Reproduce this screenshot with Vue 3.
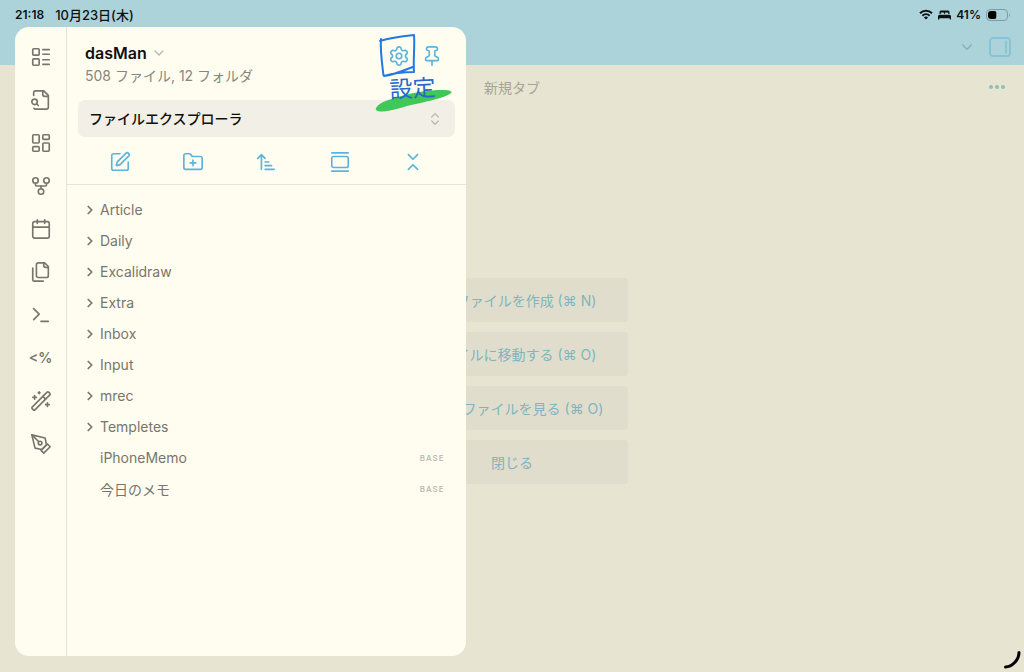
<script setup>
import { ref } from 'vue'

const icons = {
  layoutList: '<rect x="3" y="3" width="7" height="7" rx="1"/><rect x="3" y="14" width="7" height="7" rx="1"/><path d="M14 4h7M14 9h7M14 15h7M14 20h7"/>',
  fileSearch: '<path d="M14 2v4a2 2 0 0 0 2 2h4"/><path d="M4.268 21a2 2 0 0 0 1.727 1H18a2 2 0 0 0 2-2V7l-5-5H6a2 2 0 0 0-2 2v3"/><path d="m9 18-1.5-1.5"/><circle cx="5" cy="14" r="3"/>',
  dashboard: '<rect width="7" height="9" x="3" y="3" rx="1"/><rect width="7" height="5" x="14" y="3" rx="1"/><rect width="7" height="9" x="14" y="12" rx="1"/><rect width="7" height="5" x="3" y="16" rx="1"/>',
  fork: '<circle cx="12" cy="18" r="3"/><circle cx="6" cy="6" r="3"/><circle cx="18" cy="6" r="3"/><path d="M18 9v2c0 .6-.4 1-1 1H7c-.6 0-1-.4-1-1V9"/><path d="M12 12v3"/>',
  calendar: '<path d="M8 2v4M16 2v4"/><rect width="18" height="18" x="3" y="4" rx="2"/><path d="M3 10h18"/>',
  files: '<path d="M20 7h-3a2 2 0 0 1-2-2V2"/><path d="M9 18a2 2 0 0 1-2-2V4a2 2 0 0 1 2-2h7l4 4v10a2 2 0 0 1-2 2Z"/><path d="M3 7.6v12.8A1.6 1.6 0 0 0 4.6 22h9.8"/>',
  terminal: '<path d="m4 17 6-6-6-6"/><path d="M12 19h8"/>',
  wand: '<path d="m21.64 3.64-1.28-1.28a1.21 1.21 0 0 0-1.72 0L2.36 18.64a1.21 1.21 0 0 0 0 1.72l1.28 1.28a1.2 1.2 0 0 0 1.72 0L21.64 5.36a1.2 1.2 0 0 0 0-1.72"/><path d="m14 7 3 3M5 6v4M19 14v4M10 2v2M7 8H3M21 16h-4M11 3H9"/>',
  pen: '<path d="m12 19 7-7 3 3-7 7-3-3z"/><path d="m18 13-1.5-7.5L2 2l3.5 14.5L13 18l5-5z"/><path d="m2 2 7.586 7.586"/><circle cx="11" cy="11" r="2"/>',
  settings: '<path d="M9.671 4.136a2.34 2.34 0 0 1 4.659 0 2.34 2.34 0 0 0 3.319 1.915 2.34 2.34 0 0 1 2.33 4.033 2.34 2.34 0 0 0 0 3.831 2.34 2.34 0 0 1-2.33 4.033 2.34 2.34 0 0 0-3.319 1.915 2.34 2.34 0 0 1-4.659 0 2.34 2.34 0 0 0-3.32-1.915 2.34 2.34 0 0 1-2.33-4.033 2.34 2.34 0 0 0 0-3.831A2.34 2.34 0 0 1 6.35 6.051a2.34 2.34 0 0 0 3.319-1.915"/><circle cx="12" cy="12" r="3"/>',
  pin: '<path d="M12 17v5"/><path d="M9 10.76a2 2 0 0 1-1.11 1.79l-1.78.9A2 2 0 0 0 5 15.24V16a1 1 0 0 0 1 1h12a1 1 0 0 0 1-1v-.76a2 2 0 0 0-1.11-1.79l-1.78-.9A2 2 0 0 1 15 10.76V7a1 1 0 0 1 1-1 2 2 0 0 0 0-4H8a2 2 0 0 0 0 4 1 1 0 0 1 1 1z"/>',
  edit: '<path d="M12 3H5a2 2 0 0 0-2 2v14a2 2 0 0 0 2 2h14a2 2 0 0 0 2-2v-7"/><path d="M18.375 2.625a1 1 0 0 1 3 3l-9.013 9.014a2 2 0 0 1-.853.505l-2.873.84a.5.5 0 0 1-.62-.62l.84-2.873a2 2 0 0 1 .506-.852z"/>',
  folderPlus: '<path d="M12 10v6M9 13h6"/><path d="M20 20a2 2 0 0 0 2-2V8a2 2 0 0 0-2-2h-7.9a2 2 0 0 1-1.69-.9L9.6 3.9A2 2 0 0 0 7.93 3H4a2 2 0 0 0-2 2v13a2 2 0 0 0 2 2Z"/>',
  sort: '<path d="m3 8 4-4 4 4M7 4v16M11 12h4M11 16h7M11 20h10"/>',
  gallery: '<path d="M3 2h18"/><rect width="18" height="12" x="3" y="6" rx="2"/><path d="M3 22h18"/>',
  collapse: '<path d="m7 20 5-5 5 5M7 4l5 5 5-5"/>',
  chevronDown: '<path d="m6 9 6 6 6-6"/>',
  chevronRight: '<path d="m9 18 6-6-6-6"/>',
  upDown: '<path d="m7 15 5 5 5-5M7 9l5-5 5 5"/>',
}

const ribbon = [
  { icon: 'layoutList', label: 'リスト' },
  { icon: 'fileSearch', label: 'ファイル検索' },
  { icon: 'dashboard', label: 'ダッシュボード' },
  { icon: 'fork', label: 'グラフビュー' },
  { icon: 'calendar', label: 'カレンダー' },
  { icon: 'files', label: 'テンプレート' },
  { icon: 'terminal', label: 'コマンドパレット' },
  { text: '<%', label: 'Templater' },
  { icon: 'wand', label: '整形' },
  { icon: 'pen', label: '描画' },
]

const tools = [
  { icon: 'edit', label: '新規ノート' },
  { icon: 'folderPlus', label: '新規フォルダ' },
  { icon: 'sort', label: '並べ替え' },
  { icon: 'gallery', label: '自動表示' },
  { icon: 'collapse', label: '折りたたむ' },
]

const items = [
  { name: 'Article', folder: true },
  { name: 'Daily', folder: true },
  { name: 'Excalidraw', folder: true },
  { name: 'Extra', folder: true },
  { name: 'Inbox', folder: true },
  { name: 'Input', folder: true },
  { name: 'mrec', folder: true },
  { name: 'Templetes', folder: true },
  { name: 'iPhoneMemo', tag: 'BASE' },
  { name: '今日のメモ', tag: 'BASE' },
]

const actions = [
  '新規ファイルを作成 (⌘ N)',
  'ファイルに移動する (⌘ O)',
  '最近のファイルを見る (⌘ O)',
  '閉じる',
]

const view = ref('files')
</script>

<template>
  <div class="app">
    <header class="top">
      <div class="status">
        <span>21:18</span>
        <span class="date">10月23日(木)</span>
        <div class="status-right">
          <svg width="14" height="11" viewBox="0 0 14 11" fill="none" stroke="#0b1214" stroke-width="2">
            <path d="M1 4.2a8.6 8.6 0 0 1 12 0M3.4 6.7a5.2 5.2 0 0 1 7.2 0" />
            <path d="M7 10.6 4.9 8.5a3 3 0 0 1 4.2 0Z" fill="#0b1214" stroke="none" />
          </svg>
          <svg width="13" height="10" viewBox="0 0 13 10" fill="#0b1214">
            <path d="M1.5 4V2A1.6 1.6 0 0 1 3 .5h7A1.6 1.6 0 0 1 11.5 2v2h-1.2V3.3a.8.8 0 0 0-.8-.8H7.7a.8.8 0 0 0-.8.8V4h-.8v-.7a.8.8 0 0 0-.8-.8H3.5a.8.8 0 0 0-.8.8V4Z" />
            <path d="M0 6.2A1.5 1.5 0 0 1 1.5 4.7h10A1.5 1.5 0 0 1 13 6.2v3.3h-1.3V8.3H1.3v1.2H0Z" />
          </svg>
          <span>41%</span>
          <svg width="25" height="12" viewBox="0 0 25 12" fill="none">
            <rect x=".5" y=".5" width="21" height="11" rx="3.5" stroke="#7d9da2" />
            <path d="M5 2H8.500A1.800 1.800 0 0 1 10.300 4V8A1.800 1.800 0 0 1 8.500 10H5A3 3 0 0 1 2 7V5A3 3 0 0 1 5 2Z" fill="#000" />
            <path d="M23 4.2v3.6c1.2-.4 1.2-3.2 0-3.6Z" fill="#7d9da2" />
          </svg>
        </div>
      </div>
      <div class="tabs">
        <button aria-label="タブ一覧"><svg class="faint" width="18" height="18" viewBox="0 0 24 24" v-html="icons.chevronDown" /></button>
        <button aria-label="右サイドバー">
          <svg class="side" width="22" height="20" viewBox="0 0 22 20">
            <rect x="1" y="1" width="20" height="18" rx="3" /><path d="M17 4.5v11" />
          </svg>
        </button>
      </div>
    </header>

    <main class="main">
      <div class="view-head">
        <span class="view-title">新規タブ</span>
        <button class="more" aria-label="その他">
          <svg width="18" height="6" viewBox="0 0 18 6"><circle cx="3" cy="3" r="2" /><circle cx="9" cy="3" r="2" /><circle cx="15" cy="3" r="2" /></svg>
        </button>
      </div>
      <div class="actions">
        <button v-for="a in actions" :key="a">{{ a }}</button>
      </div>
    </main>

    <aside class="drawer">
      <nav class="ribbon">
        <button v-for="r in ribbon" :key="r.label" :aria-label="r.label">
          <svg v-if="r.icon" width="22" height="22" viewBox="0 0 24 24" v-html="icons[r.icon]" />
          <span v-else>{{ r.text }}</span>
        </button>
      </nav>
      <section class="panel">
        <div class="panel-head">
          <div class="vault">
            <button class="vault-name">
              dasMan
              <svg class="faint" width="16" height="16" viewBox="0 0 24 24" v-html="icons.chevronDown" />
            </button>
            <p>508 ファイル, 12 フォルダ</p>
          </div>
          <div class="head-icons">
            <button aria-label="設定"><svg width="22" height="22" viewBox="0 0 24 24" v-html="icons.settings" /></button>
            <button aria-label="ピン留め"><svg width="22" height="22" viewBox="0 0 24 24" v-html="icons.pin" /></button>
          </div>
        </div>
        <div class="picker">
          <select v-model="view" aria-label="表示">
            <option value="files">ファイルエクスプローラ</option>
          </select>
          <svg class="faint picker-icon" width="16" height="16" viewBox="0 0 24 24" v-html="icons.upDown" />
        </div>
        <div class="tools">
          <button v-for="t in tools" :key="t.label" :aria-label="t.label">
            <svg width="22" height="22" viewBox="0 0 24 24" v-html="icons[t.icon]" />
          </button>
        </div>
        <ul class="tree">
          <li v-for="i in items" :key="i.name">
            <button>
              <span class="twist"><svg v-if="i.folder" width="14" height="14" viewBox="0 0 24 24" v-html="icons.chevronRight" /></span>
              <span>{{ i.name }}</span>
              <span v-if="i.tag" class="tag">{{ i.tag }}</span>
            </button>
          </li>
        </ul>
      </section>
      <svg class="note" width="80" height="84" viewBox="0 0 80 84">
        <path d="M2 76C5 70 17 67 29 63.5C43 60 63 57 75 58.5C79 59.5 78 61 74 63C63 68 50 70 37 73C26 76 17 79 8 79.5C3 79.5 1 78 2 76Z" fill="#40c759" />
        <path d="M7 7C6 18 8 31 9.5 43.5M6 9C15 6 30 4 40 3C41 14 39 28 40 40C31 40 20 41 10 44C20 43 31 38 40 34.5" fill="none" stroke="#2478e6" stroke-width="2" stroke-linecap="round" stroke-linejoin="round" />
        <text x="16" y="66" transform="rotate(-3 16 66)">設定</text>
      </svg>
    </aside>

    <svg class="corner" width="20" height="20" viewBox="0 0 20 20"><path d="M17 2.5C17 10 10 17 3.5 17" /></svg>
  </div>
</template>

<style>
body {
  margin: 0;
}
</style>

<style scoped>
.app {
  position: relative;
  display: flex;
  flex-direction: column;
  min-height: 100vh;
  background: #e7e4d2;
  color: #78756e;
  font-family: Inter, "Noto Sans CJK JP", sans-serif;
  font-size: 14px;
}
button {
  display: flex;
  align-items: center;
  justify-content: center;
  margin: 0;
  padding: 0;
  border: 0;
  background: none;
  color: inherit;
  font: inherit;
}
svg {
  display: block;
  flex: none;
}
button > svg,
.twist > svg,
.picker-icon {
  fill: none;
  stroke: currentColor;
  stroke-width: 1.8;
  stroke-linecap: round;
  stroke-linejoin: round;
}
.top {
  height: 65px;
  background: #abd3d9;
}
.status {
  display: flex;
  align-items: center;
  gap: 11px;
  height: 29px;
  padding: 0 13px 0 15px;
  color: #0b1214;
  font-size: 12px;
  font-weight: 600;
}
.date {
  font-size: 13px;
  font-weight: 500;
}
.status-right {
  display: flex;
  align-items: center;
  gap: 5px;
  margin-left: auto;
}
.tabs {
  display: flex;
  align-items: center;
  justify-content: flex-end;
  gap: 13px;
  height: 36px;
  padding-right: 13px;
}
.tabs .faint {
  color: #84b2b9;
}
button > .side {
  stroke: #86c3d4;
}
.main {
  flex: 1;
  display: flex;
  flex-direction: column;
}
.view-head {
  display: grid;
  grid-template-columns: 1fr auto 1fr;
  align-items: center;
  height: 44px;
  padding: 0 18px;
}
.view-title {
  grid-column: 2;
  color: #a6a497;
}
.more {
  justify-self: end;
}
.more > svg {
  fill: #8fc0b8;
  stroke: none;
}
.actions {
  display: flex;
  flex-direction: column;
  align-items: center;
  gap: 10px;
  padding-top: 169px;
}
.actions button {
  width: 232px;
  height: 44px;
  border-radius: 4px;
  background: #e0ddcd;
  color: #80b5bd;
}
.drawer {
  position: absolute;
  top: 27px;
  bottom: 16px;
  left: 15px;
  width: 44%;
  display: flex;
  border-radius: 14px;
  background: #fffdf0;
}
.ribbon {
  display: flex;
  flex-direction: column;
  width: 51px;
  padding-top: 8px;
  border-right: 1px solid #e6e4d9;
}
.ribbon button {
  height: 43px;
  font-size: 14px;
  font-weight: 600;
}
.panel {
  flex: 1;
  min-width: 0;
}
.panel-head {
  display: flex;
  justify-content: space-between;
  height: 61px;
  padding: 12px 23px 0 18px;
}
.vault-name {
  gap: 4px;
  height: 27px;
  color: #100f0f;
  font-size: 16px;
  font-weight: 600;
}
.vault p {
  margin: 0;
  color: #878580;
  line-height: 20px;
}
.head-icons {
  display: flex;
  gap: 11px;
  height: 34px;
  color: #5ab4dc;
}
.faint {
  color: #b7b5ac;
}
.picker {
  position: relative;
  margin: 0 11px;
}
.picker select {
  display: block;
  width: 100%;
  height: 37px;
  padding: 0 32px 0 11px;
  border: 0;
  border-radius: 7px;
  appearance: none;
  background: #f2efe7;
  color: #100f0f;
  font-family: inherit;
  font-size: 14px;
  font-weight: 500;
}
.picker-icon {
  position: absolute;
  top: 11px;
  right: 12px;
}
.tools {
  display: grid;
  grid-template-columns: repeat(5, 1fr);
  height: 48px;
  padding: 2px 16px 0;
  box-sizing: border-box;
  border-bottom: 1px solid #e6e4d9;
  color: #5ab4dc;
}
.tree {
  margin: 0;
  padding: 9px 21px 0 16px;
  list-style: none;
}
.tree button {
  width: 100%;
  height: 31px;
  justify-content: flex-start;
}
.twist {
  width: 17px;
  flex: none;
}
.twist > svg {
  stroke-width: 3;
}
.tag {
  margin-left: auto;
  color: #b7b5ac;
  font-size: 8px;
  font-weight: 500;
  letter-spacing: 1px;
}
.note {
  position: absolute;
  top: 5px;
  right: 12px;
  pointer-events: none;
}
.note text {
  fill: #2868c8;
  font-size: 23px;
  font-weight: 400;
}
.corner {
  position: absolute;
  right: 2px;
  bottom: 2px;
  fill: none;
  stroke: #000;
  stroke-width: 3;
  stroke-linecap: round;
}
</style>
